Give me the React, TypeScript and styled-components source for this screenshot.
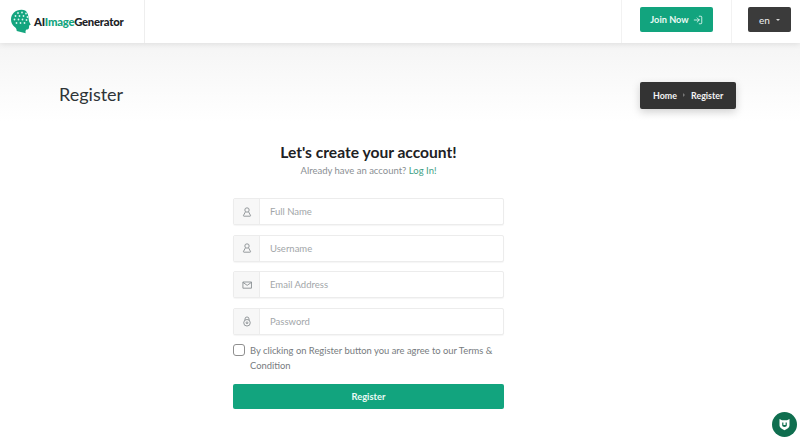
import styled, { createGlobalStyle } from "styled-components";
import { LogIn } from "lucide-react";

const Global = createGlobalStyle`
  html, body { margin: 0; padding: 0; background: #fff; }
  body { font-family: "Lato", "Noto Sans", sans-serif; width: 800px; height: 440px; overflow: hidden; }
  * { box-sizing: border-box; }
`;

const Page = styled.div`
  position: relative;
  width: 800px;
  height: 440px;
  overflow: hidden;
`;

const Header = styled.header`
  position: relative;
  z-index: 1;
  display: flex;
  height: 43px;
  background: #fff;
  box-shadow: 0 1px 6px rgba(0, 0, 0, 0.1);
`;

const LogoCell = styled.div`
  display: flex;
  align-items: center;
  gap: 1px;
  width: 145px;
  padding-left: 10px;
  border-right: 1px solid #eeeeee;
`;

const LogoText = styled.span`
  font-size: 11.3px;
  font-weight: 900;
  letter-spacing: -0.25px;
  color: #1c2226;
`;

const LogoAccent = styled.span`
  color: #12a47e;
`;

const HeaderFill = styled.div`
  flex: 1;
`;

const JoinCell = styled.div`
  display: flex;
  align-items: flex-start;
  width: 111px;
  padding: 7px 0 0 18px;
  border-left: 1px solid #f2f2f2;
  border-right: 1px solid #f2f2f2;
`;

const LangCell = styled.div`
  width: 68px;
  padding: 7px 0 0 16px;
`;

const JoinButton = styled.button`
  display: flex;
  align-items: center;
  justify-content: center;
  gap: 4px;
  width: 73px;
  height: 25px;
  padding: 0;
  border: 0;
  border-radius: 2px;
  background: #12a47e;
  color: #eafaf5;
  font: 700 9.2px "Lato", sans-serif;
`;

const LangButton = styled.button`
  display: flex;
  align-items: center;
  justify-content: center;
  gap: 6px;
  width: 43px;
  height: 25px;
  padding: 0;
  border: 0;
  border-radius: 2px;
  background: #3b3b3b;
  color: #f2f2f2;
  font: 400 10px "Lato", sans-serif;
`;

const Caret = styled.span`
  width: 0;
  height: 0;
  margin-top: 1px;
  border-left: 2.5px solid transparent;
  border-right: 2.5px solid transparent;
  border-top: 2.5px solid #d8d8d8;
`;

const Hero = styled.section`
  display: flex;
  align-items: center;
  justify-content: space-between;
  height: 87px;
  padding: 15px 64px 0 59px;
  background: linear-gradient(#f5f5f5, #ffffff 90%);
`;

const PageTitle = styled.h1`
  margin: 0;
  font-size: 18px;
  font-weight: 400;
  color: #2e3438;
`;

const Breadcrumb = styled.nav`
  display: flex;
  align-items: center;
  gap: 5px;
  width: 96px;
  height: 27px;
  margin-top: 2px;
  padding-left: 13px;
  border-radius: 2px;
  background: #333333;
  box-shadow: 0 3px 8px rgba(0, 0, 0, 0.18);
  color: #f4f4f4;
  font-size: 8.9px;
  font-weight: 700;
`;

const CrumbArrow = styled.span`
  width: 0;
  height: 0;
  margin: 0 1px;
  border-top: 2px solid transparent;
  border-bottom: 2px solid transparent;
  border-left: 2.5px solid #777;
`;

const FormWrap = styled.form`
  display: flex;
  flex-direction: column;
  width: 271px;
  margin: 12px 0 0 233px;
`;

const Title = styled.h2`
  margin: 0;
  text-align: center;
  font-size: 15.6px;
  line-height: 20px;
  font-weight: 700;
  color: #1d2124;
`;

const Subtitle = styled.p`
  margin: 2px 0 20px;
  text-align: center;
  font-size: 9.5px;
  line-height: 14px;
  color: #8a8f93;
`;

const LoginLink = styled.a`
  color: #3f9f85;
`;

const Fields = styled.div`
  display: flex;
  flex-direction: column;
  gap: 9.7px;
`;

const Field = styled.label`
  display: flex;
  height: 27px;
  border: 1px solid #ececec;
  border-radius: 2px;
  box-shadow: 0 1px 1px rgba(0, 0, 0, 0.04);
  background: #fff;
`;

const IconBox = styled.span`
  display: flex;
  align-items: center;
  justify-content: center;
  width: 26px;
  background: #f7f7f7;
  border-right: 1px solid #ececec;
  color: #8a8f93;
`;

const Input = styled.input`
  flex: 1;
  min-width: 0;
  padding: 0 0 0 10px;
  border: 0;
  outline: 0;
  background: transparent;
  font: 400 9.5px "Lato", sans-serif;
  color: #333;
  &::placeholder { color: #a2a6a9; opacity: 1; }
`;

const Terms = styled.label`
  display: flex;
  gap: 5px;
  margin-top: 8px;
  font-size: 9.4px;
  line-height: 15px;
  color: #777c80;
`;

const Check = styled.span`
  flex: none;
  width: 12px;
  height: 12px;
  margin-top: 1px;
  border: 1px solid #8f8f8f;
  border-radius: 3px;
`;

const Submit = styled.button`
  height: 25px;
  margin-top: 11px;
  border: 0;
  border-radius: 2px;
  background: #12a47e;
  color: #eafaf5;
  font: 700 9.3px "Lato", sans-serif;
`;

const Badge = styled.div`
  position: absolute;
  right: 3px;
  bottom: 3px;
  display: flex;
  align-items: center;
  justify-content: center;
  width: 25px;
  height: 25px;
  border-radius: 50%;
  background: #0f6e4f;
`;

function LogoMark() {
  const dots = [
    [8, 4], [12, 3.500], [16, 4.500], [5.500, 7], [9.500, 7], [13.500, 7], [17.500, 8], [4.500, 10.500], [8.500, 10.500], [12.500, 10.500], [16.500, 11], [6.500, 14], [10.500, 14], [14.500, 14],
  ];
  return (
    <svg width="23" height="25" viewBox="0 0 23 25">
      <path
        d="M11.500 .8C5.500 .8 1 5 1 10.500c0 3.300 1.400 5.800 3.700 7.500 1.400 1 2 2.300 2 3.900l9 2.300c-.4-1.600-.2-2.900.7-3.600 1.600 0 2.500-.6 2.600-2l.1-2.100 1.600-.8-1.700-3.400C18.500 5.500 17.500.8 11.500.8z"
        fill="#14a57f"
      />
      {dots.map(([x, y]) => (
        <circle key={`${x}-${y}`} cx={x} cy={y} r="0.9" fill="#d9f4ec" />
      ))}
    </svg>
  );
}

function ShieldMark() {
  return (
    <svg width="13" height="13" viewBox="0 0 13 13">
      <path d="M1.500 1l2.500 1.300h5L11.500 1v6.500c0 2-2.500 3.500-5 4.800-2.500-1.300-5-2.800-5-4.800z" fill="#fff" />
      <path d="M4.200 4.500v2.800c0 1 1 1.600 2.300 1.600s2.300-.6 2.300-1.600V4.500H7.600v2.500H5.400V4.500z" fill="#0f6e4f" />
    </svg>
  );
}

function PersonIcon() {
  return (
    <svg width="10" height="10" viewBox="0 0 11 11" fill="none" stroke="currentColor" strokeWidth="1">
      <circle cx="5.500" cy="3.300" r="2.400" />
      <path d="M3.800 5.300L1.600 9.300c-.2.400 0 .8.500.8h6.800c.5 0 .7-.4.500-.8L7.200 5.300" />
    </svg>
  );
}

function EnvelopeIcon() {
  return (
    <svg width="10" height="10" viewBox="0 0 11 11" fill="none" stroke="currentColor" strokeWidth="1">
      <path d="M1 2.200h9.400v6.800H1z" />
      <path d="M1 2.600l4.700 3.300 4.700-3.300" />
    </svg>
  );
}

function PadlockIcon() {
  return (
    <svg width="10" height="11" viewBox="0 0 11 12" fill="none" stroke="currentColor" strokeWidth="1">
      <path d="M3.300 4.500V3.200a2.200 2.200 0 0 1 4.400 0v1.300" />
      <circle cx="5.500" cy="7.400" r="3.600" />
      <circle cx="5.500" cy="7.400" r="1" />
    </svg>
  );
}

const fields = [
  { placeholder: "Full Name", icon: PersonIcon, type: "text" },
  { placeholder: "Username", icon: PersonIcon, type: "text" },
  { placeholder: "Email Address", icon: EnvelopeIcon, type: "email" },
  { placeholder: "Password", icon: PadlockIcon, type: "password" },
];

export default function App() {
  return (
    <Page>
      <Global />
      <Header>
        <LogoCell>
          <LogoMark />
          <LogoText>
            AI<LogoAccent>Image</LogoAccent>Generator
          </LogoText>
        </LogoCell>
        <HeaderFill />
        <JoinCell>
          <JoinButton type="button">
            Join Now <LogIn size={10} />
          </JoinButton>
        </JoinCell>
        <LangCell>
          <LangButton type="button">
            en <Caret />
          </LangButton>
        </LangCell>
      </Header>
      <Hero>
        <PageTitle>Register</PageTitle>
        <Breadcrumb>
          Home <CrumbArrow /> Register
        </Breadcrumb>
      </Hero>
      <FormWrap>
        <Title>Let's create your account!</Title>
        <Subtitle>
          Already have an account? <LoginLink>Log In!</LoginLink>
        </Subtitle>
        <Fields>
          {fields.map(({ placeholder, icon: Icon, type }) => (
            <Field key={placeholder}>
              <IconBox>
                <Icon />
              </IconBox>
              <Input type={type} placeholder={placeholder} />
            </Field>
          ))}
        </Fields>
        <Terms>
          <Check />
          <span>By clicking on Register button you are agree to our Terms &amp; Condition</span>
        </Terms>
        <Submit type="button">Register</Submit>
      </FormWrap>
      <Badge>
        <ShieldMark />
      </Badge>
    </Page>
  );
}
